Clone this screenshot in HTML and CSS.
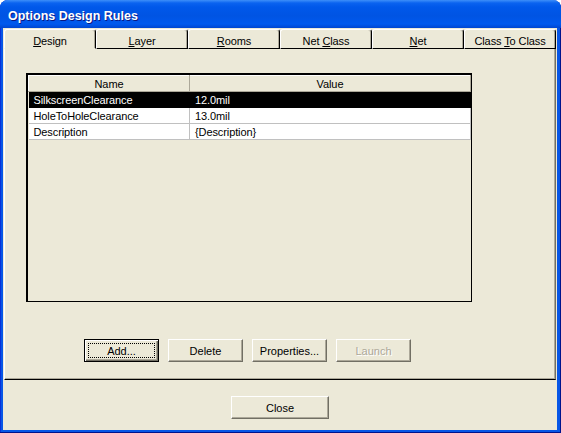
FILE: index.html
```html
<!DOCTYPE html>
<html lang="en">
<head>
  <meta charset="UTF-8" />
  <title>Options Design Rules</title>
  <link rel="stylesheet" href="styles.css">
</head>
<body>
  <div class="window">
    <div class="titlebar">Options Design Rules</div>

    <div class="client">
      <div class="tabs">
        <div class="tab active"><u>D</u>esign</div>
        <div class="tab"><u>L</u>ayer</div>
        <div class="tab"><u>R</u>ooms</div>
        <div class="tab">Net <u>C</u>lass</div>
        <div class="tab"><u>N</u>et</div>
        <div class="tab">Class <u>T</u>o Class</div>
      </div>

      <div class="panel">
        <!-- rules list -->
        <div class="list">
          <table>
            <thead>
              <tr><th class="col-name">Name</th><th>Value</th></tr>
            </thead>
            <tbody>
              <tr class="selected"><td>SilkscreenClearance</td><td>12.0mil</td></tr>
              <tr><td>HoleToHoleClearance</td><td>13.0mil</td></tr>
              <tr><td>Description</td><td>{Description}</td></tr>
            </tbody>
          </table>
        </div>

        <div class="actions">
          <button class="btn default">Add...</button>
          <button class="btn">Delete</button>
          <button class="btn">Properties...</button>
          <button class="btn" disabled>Launch</button>
        </div>
      </div>

      <div class="footer">
        <button class="btn close">Close</button>
      </div>
    </div>
  </div>
</body>
</html>
```

FILE: styles.css
```css
* {
  box-sizing: border-box;
}

body {
  margin: 0;
  font-family: "Liberation Sans", Arial, sans-serif;
  font-size: 11px;
  letter-spacing: -0.1px;
  color: #000;
  background: #fff;
}

.window {
  width: 561px;
  height: 433px;
  display: flex;
  flex-direction: column;
  padding: 0 4px 3px 3px;
  background: #0756e6;
  border-radius: 8px 8px 0 0;
  box-shadow: inset -1px -1px 0 #00138c, inset 1px 0 0 #0831d9;
}

.titlebar {
  height: 28px;
  margin: 0 -4px 0 -3px;
  padding: 3px 0 0 8px;
  display: flex;
  align-items: center;
  color: #fff;
  font-weight: bold;
  font-size: 12.5px;
  letter-spacing: 0;
  text-shadow: 1px 1px 0 #0a1883;
  border-radius: 8px 8px 0 0;
  background: linear-gradient(to bottom, #3d8ff9 0, #0a63f0 3px, #0058ea 7px, #0054e3 16px, #0059ee 24px, #0046d0 28px);
}

.client {
  flex: 1;
  display: flex;
  flex-direction: column;
  padding: 1px 1px 0;
  background: #ece9d8;
}

/* tab strip */
.tabs {
  display: flex;
  height: 20px;
}

.tab {
  flex: 1;
  padding-top: 5px;
  line-height: 13px;
  text-align: center;
  border: 1px solid #000;
  border-top-color: #fff;
  border-left-color: #fff;
  border-radius: 3px 3px 0 0;
  box-shadow: inset -1px 0 0 #aca899;
}

.tab.active {
  border-bottom-color: #ece9d8;
}

.panel {
  height: 331px;
  padding: 24px 0 0 21px;
  border-left: 1px solid #fff;
  border-right: 1px solid #716f64;
  border-bottom: 1px solid #000;
  box-shadow: inset -1px -1px 0 #aca899;
}

/* list view */
.list {
  width: 446px;
  height: 229px;
  border-style: solid;
  border-color: #000;
  border-width: 2px 1px 1px 2px;
}

table {
  width: 100%;
  border-collapse: collapse;
  table-layout: fixed;
}

th {
  height: 16px;
  padding: 0;
  font-weight: normal;
  text-align: center;
  background: #ece9d8;
  border-top: 1px solid #fff;
  border-left: 1px solid #fff;
  border-right: 1px solid #aca899;
  border-bottom: 1px solid #aca899;
}

th.col-name {
  width: 161px;
}

td {
  height: 16px;
  padding: 0 0 0 5px;
  background: #fff;
  white-space: nowrap;
  border-right: 1px solid #c0c0c0;
  border-bottom: 1px solid #c0c0c0;
}

tr.selected td {
  background: #000;
  color: #fff;
  border-bottom-color: #000;
  border-right-color: #000;
}

/* buttons */
.actions {
  display: flex;
  gap: 9px;
  margin-top: 37px;
  padding-left: 58px;
}

.btn {
  width: 75px;
  height: 23px;
  padding: 0;
  font: inherit;
  color: #000;
  background: #ece9d8;
  border: 1px solid;
  border-color: #fff #716f64 #716f64 #fff;
  box-shadow: inset -1px -1px 0 #aca899;
}

.btn.default {
  border-color: #000;
  box-shadow: inset 1px 1px 0 #fff, inset -1px -1px 0 #716f64, inset -2px -2px 0 #aca899;
  outline: 1px dotted #000;
  outline-offset: -5px;
}

.btn:disabled {
  color: #aca899;
  text-shadow: 1px 1px 0 #fff;
}

.footer {
  flex: 1;
  display: flex;
  justify-content: center;
  padding-top: 16px;
}

.btn.close {
  width: 98px;
}
```
